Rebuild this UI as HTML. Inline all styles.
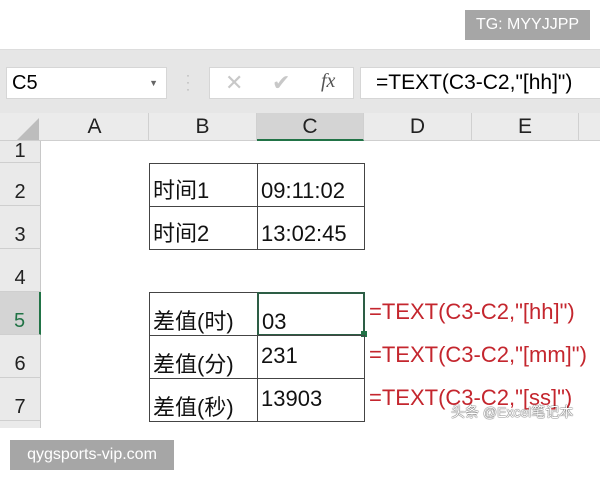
<!DOCTYPE html>
<html><head><meta charset="utf-8"><style>
*{margin:0;padding:0;box-sizing:border-box}
body{width:600px;height:480px;background:#fff;position:relative;overflow:hidden;font-family:"Liberation Sans","Noto Sans CJK SC",sans-serif}
.a{position:absolute}
.rh{position:absolute;left:0;width:41px;background:#eaeaea;border-bottom:1px solid #cfcfcf;border-right:1px solid #c8c8c8;text-align:center;font-size:20px;color:#222}
.ch{position:absolute;top:113px;height:28px;border-right:1px solid #d0d0d0;text-align:center;font-size:21px;line-height:28px;color:#222}
.cell{position:absolute;border:1.5px solid #444;font-size:22px;color:#111;padding-left:3px;white-space:nowrap}
.red{position:absolute;left:369px;font-size:22px;color:#c4262e;white-space:nowrap}
</style></head><body>
<div class="a" style="left:465px;top:10px;width:125px;height:30px;background:#a6a6a6;color:#fff;font-size:16px;line-height:30px;text-align:center">TG: MYYJJPP</div>
<div class="a" style="left:0;top:49px;width:600px;height:64px;background:#e6e6e6;border-top:1px solid #ddd"></div>
<div class="a" style="left:6px;top:67px;width:161px;height:32px;background:#fff;border:1px solid #d6d6d6;font-size:20px;line-height:30px;padding-left:5px">C5<span style="position:absolute;right:8px;top:0;font-size:9px;color:#666">▼</span></div>
<div class="a" style="left:186px;top:72px;color:#aaa;font-size:12px;line-height:7px">·<br>·<br>·</div>
<div class="a" style="left:209px;top:67px;width:145px;height:32px;background:#fff;border:1px solid #d6d6d6"></div>
<div class="a" style="left:225px;top:70px;font-size:22px;color:#c8c8c8">✕</div>
<div class="a" style="left:272px;top:70px;font-size:22px;color:#c8c8c8">✔</div>
<div class="a" style="left:321px;top:70px;font-size:20px;color:#555;font-family:'Liberation Serif',serif;font-style:italic">fx</div>
<div class="a" style="left:360px;top:67px;width:250px;height:32px;background:#fff;border:1px solid #d6d6d6;font-size:21px;line-height:30px;padding-left:15px">=TEXT(C3-C2,"[hh]")</div>
<div class="a" style="left:0;top:113px;width:600px;height:28px;background:#ebebeb;border-bottom:1px solid #cfcfcf"></div>
<svg class="a" style="left:17px;top:118px" width="22" height="22"><polygon points="22,0 22,22 0,22" fill="#bdbdbd"/></svg>
<div class="ch" style="left:41px;width:108px">A</div>
<div class="ch" style="left:149px;width:108px">B</div>
<div class="ch" style="left:257px;width:107px;background:#d4d4d4;border-bottom:2px solid #217346">C</div>
<div class="ch" style="left:364px;width:108px">D</div>
<div class="ch" style="left:472px;width:107px">E</div>
<div class="a" style="left:0;top:141px;width:600px;height:287px;background:#fff"></div>
<div class="rh" style="top:141px;height:22px;line-height:20px">1</div>
<div class="rh" style="top:163px;height:43px;line-height:58px">2</div>
<div class="rh" style="top:206px;height:43px;line-height:58px">3</div>
<div class="rh" style="top:249px;height:43px;line-height:58px">4</div>
<div class="rh" style="top:292px;height:43px;line-height:58px;background:#d4d4d4;color:#217346;border-right:2px solid #217346">5</div>
<div class="rh" style="top:335px;height:43px;line-height:58px">6</div>
<div class="rh" style="top:378px;height:43px;line-height:58px">7</div>
<div class="rh" style="top:421px;height:7px;border-bottom:none"></div>
<div class="cell" style="left:149px;top:163px;width:109px;height:44px;line-height:54px">时间1</div>
<div class="cell" style="left:257px;top:163px;width:108px;height:44px;line-height:54px">09:11:02</div>
<div class="cell" style="left:149px;top:206px;width:109px;height:44px;line-height:54px">时间2</div>
<div class="cell" style="left:257px;top:206px;width:108px;height:44px;line-height:54px">13:02:45</div>
<div class="cell" style="left:149px;top:292px;width:109px;height:44px;line-height:58px">差值(时)</div>
<div class="cell" style="left:257px;top:292px;width:108px;height:44px;line-height:56px;border:2px solid #2d5e45">03</div>
<div class="a" style="left:361px;top:331px;width:6px;height:6px;background:#217346"></div>
<div class="cell" style="left:149px;top:335px;width:109px;height:44px;line-height:58px">差值(分)</div>
<div class="cell" style="left:257px;top:335px;width:108px;height:44px;line-height:40px">231</div>
<div class="cell" style="left:149px;top:378px;width:109px;height:44px;line-height:58px">差值(秒)</div>
<div class="cell" style="left:257px;top:378px;width:108px;height:44px;line-height:40px">13903</div>
<div class="red" style="top:299px">=TEXT(C3-C2,"[hh]")</div>
<div class="red" style="top:342px">=TEXT(C3-C2,"[mm]")</div>
<div class="red" style="top:385px">=TEXT(C3-C2,"[ss]")</div>
<div class="a" style="left:451px;top:402px;font-size:14px;color:#fff;text-shadow:0 0 1px #333,0 0 1px #333">头条 @Excel笔记本</div>
<div class="a" style="left:10px;top:440px;width:164px;height:30px;background:#a6a6a6;color:#fff;font-size:16px;line-height:30px;text-align:center">qygsports-vip.com</div>
</body></html>
